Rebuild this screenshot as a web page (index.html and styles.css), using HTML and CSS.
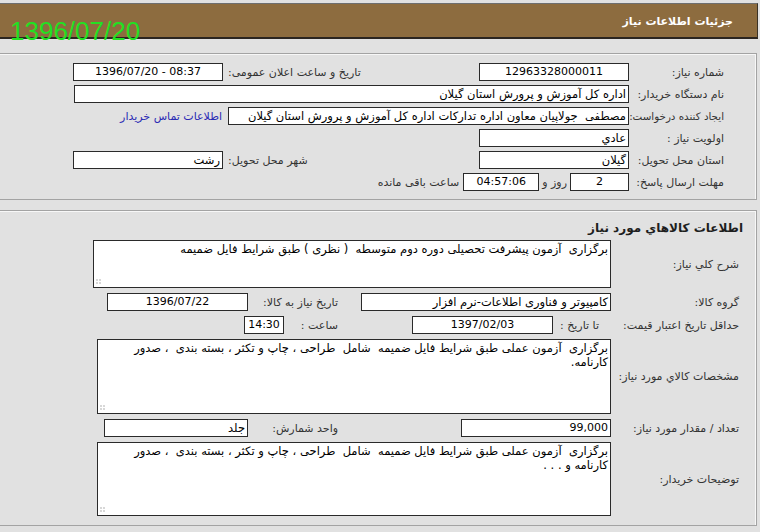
FILE: index.html
```html
<!DOCTYPE html>
<html lang="fa" dir="rtl">
<head>
<meta charset="utf-8">
<title>جزئیات اطلاعات نیاز</title>
<link rel="stylesheet" href="styles.css">
</head>
<body>
<div class="page">
  <div class="header"><span class="header-title">جزئیات اطلاعات نیاز</span></div>
  <div class="stamp">1396/07/20</div>

  <section class="panel panel-info">
    <div class="row">
      <div class="lbl">شماره نیاز:</div>
      <div class="box w149 center">12963328000011</div>
      <div class="mid">تاریخ و ساعت اعلان عمومی:</div>
      <div class="box w149 center"><span class="ltr">1396/07/20 - 08:37</span></div>
    </div>
    <div class="row">
      <div class="lbl">نام دستگاه خریدار:</div>
      <div class="box w554">اداره کل آموزش و پرورش استان گیلان</div>
    </div>
    <div class="row">
      <div class="lbl tight">ایجاد کننده درخواست:</div>
      <div class="box w400">مصطفی&nbsp; جولاپیان معاون اداره تدارکات اداره کل آموزش و پرورش استان گیلان</div>
      <a class="link" href="#">اطلاعات تماس خریدار</a>
    </div>
    <div class="row">
      <div class="lbl">اولویت نیاز :</div>
      <div class="box w149">عادي</div>
    </div>
    <div class="row">
      <div class="lbl">استان محل تحویل:</div>
      <div class="box w149">گیلان</div>
      <div class="mid">شهر محل تحویل:</div>
      <div class="box w149">رشت</div>
    </div>
    <div class="row">
      <div class="lbl">مهلت ارسال پاسخ:</div>
      <div class="box w58 center">2</div>
      <span class="txt">روز و</span>
      <div class="box w75 center">04:57:06</div>
      <span class="txt">ساعت باقی مانده</span>
    </div>
  </section>

  <section class="panel panel-goods">
    <h2 class="goods-title">اطلاعات کالاهاي مورد نیاز</h2>
    <div class="grow">
      <div class="lbl2">شرح کلي نیاز:</div>
      <div class="area-wrap"><textarea class="area a1" readonly>برگزاری  آزمون پیشرفت تحصیلی دوره دوم متوسطه  ( نظری ) طبق شرایط فایل ضمیمه</textarea></div>
    </div>
    <div class="grow">
      <div class="lbl2">گروه کالا:</div>
      <div class="cellb"><div class="box w249">کامپیوتر و فناوری اطلاعات-نرم افزار</div></div>
      <div class="cellc">تاریخ نیاز به کالا:</div>
      <div class="box w140 center">1396/07/22</div>
    </div>
    <div class="grow">
      <div class="lbl2">حداقل تاریخ اعتبار قیمت:</div>
      <div class="cellb"><span class="until">تا تاریخ :</span><div class="box w140 center">1397/02/03</div></div>
      <div class="cellc short">ساعت :</div>
      <div class="box w39 center">14:30</div>
    </div>
    <div class="grow">
      <div class="lbl2">مشخصات کالاي مورد نیاز:</div>
      <div class="area-wrap"><textarea class="area a2" readonly>برگزاری  آزمون عملی طبق شرایط فایل ضمیمه  شامل  طراحی ، چاپ و تکثر ، بسته بندی  ، صدور
کارنامه.</textarea></div>
    </div>
    <div class="grow">
      <div class="lbl2">تعداد / مقدار مورد نیاز:</div>
      <div class="cellb"><div class="box w149 num">99,000</div></div>
      <div class="cellc">واحد شمارش:</div>
      <div class="box w143">جلد</div>
    </div>
    <div class="grow">
      <div class="lbl2">توضیحات خریدار:</div>
      <div class="area-wrap"><textarea class="area a3" readonly>برگزاری  آزمون عملی طبق شرایط فایل ضمیمه  شامل  طراحی ، چاپ و تکثر ، بسته بندی  ، صدور
کارنامه و . . .</textarea></div>
    </div>
  </section>
</div>
</body>
</html>
```
FILE: styles.css
```css
* { box-sizing: border-box; }
html, body { margin: 0; padding: 0; }
body {
  background: #e1e1e1;
  font-family: "DejaVu Sans", sans-serif;
  font-size: 11px;
  color: #333;
  width: 760px;
  height: 532px;
  overflow: hidden;
}
.page {
  position: relative;
  padding: 3px 2px 0 0;
}
.header {
  height: 36px;
  background: #8d6c3f;
  border-top: 1px solid #6e6e6e;
  border-right: 1px solid #3a3226;
  border-bottom: 2px solid #2b2520;
  display: flex;
  align-items: center;
  padding-right: 24px;
}
.header-title {
  color: #fff;
  font-size: 11px;
  font-weight: bold;
  margin-top: 1px;
}
.stamp {
  position: absolute;
  left: 10px;
  top: 18px;
  direction: ltr;
  font-family: "Liberation Sans", Arial, sans-serif;
  font-size: 26px;
  line-height: 26px;
  color: #22e022;
}
.panel {
  border: 1px solid #a3a3a3;
  border-left: none;
  margin-right: 1px;
  box-shadow: inset -1px 1px 0 #f7f7f7;
}
.panel-info {
  margin-top: 14px;
  height: 147px;
  padding-top: 7px;
}
.row {
  display: flex;
  align-items: center;
  height: 22px;
}
.lbl {
  width: 127px;
  flex: none;
  padding-right: 32px;
  white-space: nowrap;
}
.lbl.tight {
  font-size: 10.3px;
}
.mid {
  width: 256px;
  flex: none;
  text-align: left;
  padding-left: 5px;
  white-space: nowrap;
}
.box {
  flex: none;
  height: 18px;
  background: #fff;
  border: 1px solid #2a2a2a;
  color: #000;
  padding: 0 2px;
  font-size: 11.5px;
  line-height: 16px;
  white-space: nowrap;
  overflow: hidden;
  text-align: right;
}
.box.center { text-align: center; font-size: 11px; }
.box.num { font-size: 11px; }
.ltr { direction: ltr; unicode-bidi: isolate; }
.w39 { width: 40px; }
.w58 { width: 59px; }
.w75 { width: 76px; }
.w140 { width: 141px; }
.w143 { width: 144px; }
.w149 { width: 150px; }
.w249 { width: 250px; }
.w400 { width: 401px; }
.w554 { width: 555px; }
.link {
  color: #2a2ab4;
  text-decoration: none;
  margin-right: 6px;
  white-space: nowrap;
}
.txt {
  margin: 0 3px;
  white-space: nowrap;
}
.txt:last-child { margin-right: 4px; }

.panel-goods {
  margin-top: 10px;
  height: 316px;
  padding-top: 8px;
}
.goods-title {
  margin: 0 0 3px;
  padding-right: 13px;
  font-size: 12px;
  line-height: 18px;
  font-weight: bold;
  color: #1e1e1e;
}
.grow {
  display: flex;
  align-items: center;
  margin-bottom: 5px;
}
.lbl2 {
  width: 145px;
  flex: none;
  padding-right: 17px;
  white-space: nowrap;
}
.cellb {
  width: 260px;
  flex: none;
  display: flex;
  align-items: center;
}
.until {
  padding-right: 12px;
  margin-left: 7px;
  white-space: nowrap;
}
.cellc {
  width: 103px;
  flex: none;
  padding-right: 13px;
  white-space: nowrap;
}
.cellc.short {
  width: 67px;
}
.area-wrap {
  position: relative;
  flex: none;
}
.area-wrap::after {
  content: "";
  position: absolute;
  left: 3px;
  bottom: 3px;
  width: 6px;
  height: 6px;
  background-image: radial-gradient(circle at 1px 1px, #c2c2c2 0.6px, transparent 0.9px);
  background-size: 3px 3px;
  pointer-events: none;
}
.area {
  display: block;
  margin: 0;
  background: #fff;
  border: 1px solid #2a2a2a;
  border-radius: 0;
  font-family: "DejaVu Sans", sans-serif;
  font-size: 11.5px;
  line-height: 14px;
  color: #000;
  padding: 1px 2px;
  direction: rtl;
  outline: none;
  overflow: hidden;
  resize: none;
}
.a1 { width: 518px; height: 48px; }
.a2 { width: 514px; height: 75px; }
.a3 { width: 514px; height: 74px; }
```
